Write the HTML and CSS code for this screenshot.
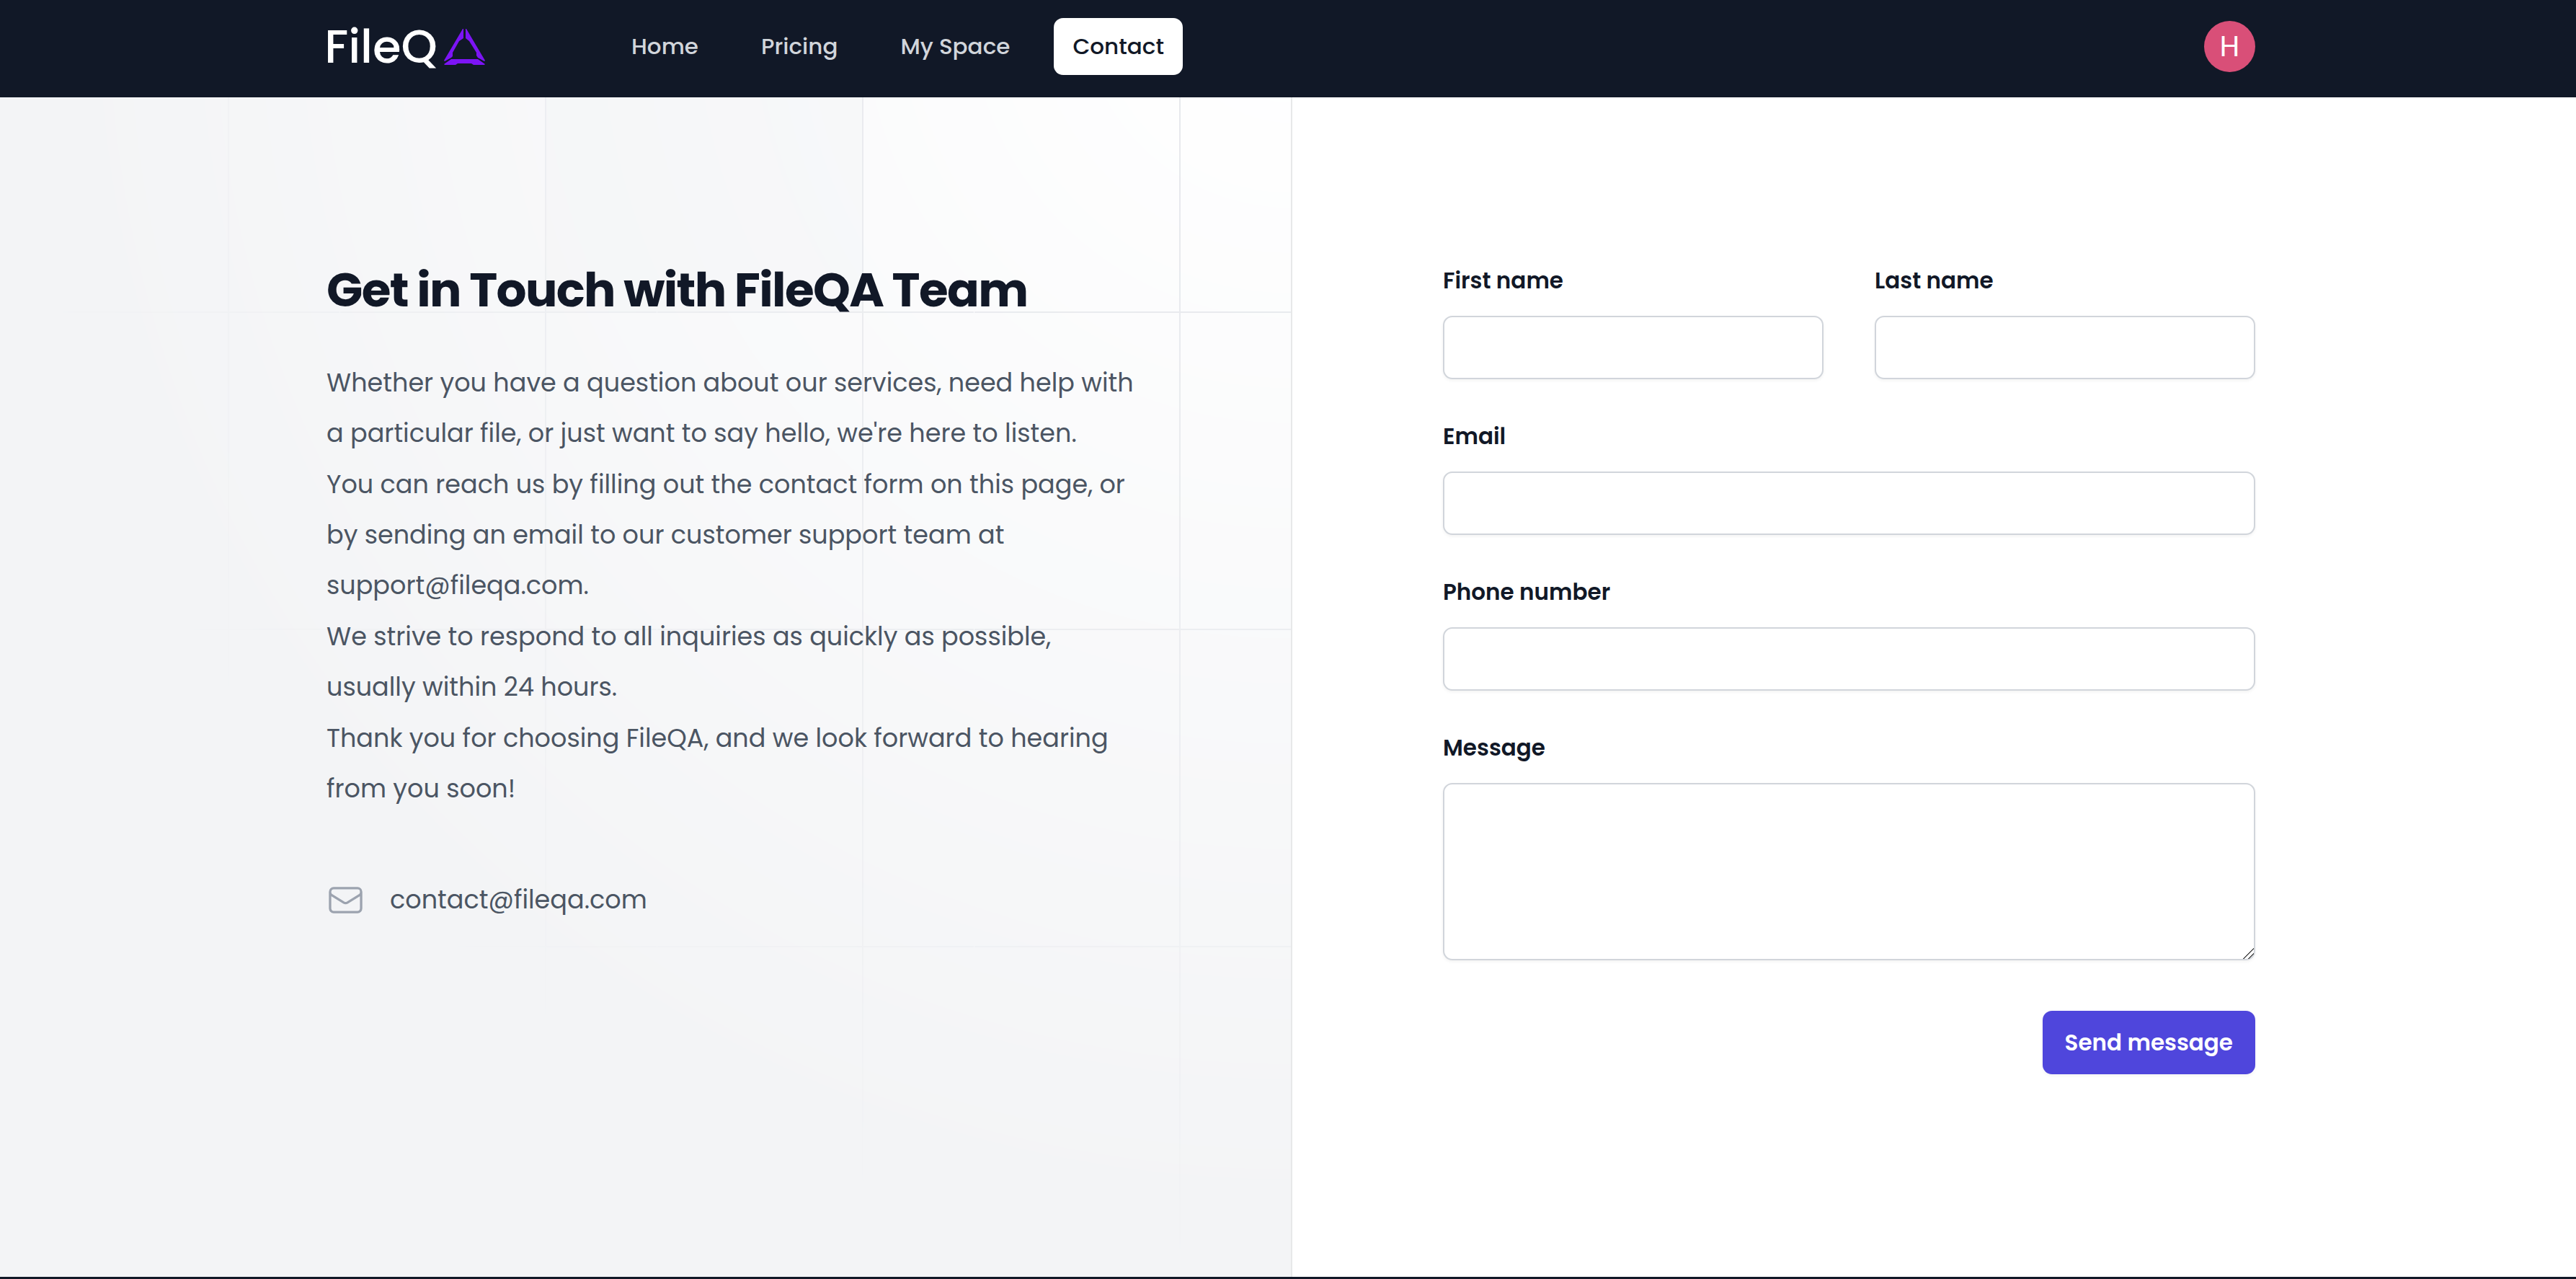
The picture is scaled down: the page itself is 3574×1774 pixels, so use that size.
FILE: index.html
```html
<!DOCTYPE html>
<html lang="en">
<head>
<meta charset="utf-8">
<meta name="viewport" content="width=device-width, initial-scale=1">
<title>Contact - FileQA</title>
<link rel="stylesheet" href="styles.css">
</head>
<body>
<div class="page">
  <header class="site-header">
    <div class="container header-row">
      <a class="logo" href="#">
        <span class="logo-text">FileQ</span>
        <svg class="logo-mark" viewBox="0 0 57 50" aria-hidden="true">
          <path d="M27 0H26L0 44L1 45L10 40L12 38V33L21 17L27 13Z"/>
          <path d="M30 0H31L57 44L56 45L47 40L45 37V33L35 17L30 13Z"/>
          <path d="M1 50L0 49L10 42H47L57 49L56 50H41L38 48H19L16 50Z"/>
        </svg>
      </a>
      <nav class="nav" aria-label="Main">
        <a class="nav-link" href="#">Home</a>
        <a class="nav-link" href="#">Pricing</a>
        <a class="nav-link" href="#">My Space</a>
        <a class="nav-link active" href="#" aria-current="page">Contact</a>
      </nav>
      <button class="avatar" type="button" aria-label="Account">H</button>
    </div>
  </header>

  <div class="backdrop" aria-hidden="true">
    <svg class="grid-lines" width="100%" height="100%">
      <defs>
        <pattern id="grid" width="440" height="440" x="100%" y="-8" patternUnits="userSpaceOnUse">
          <path d="M286 440V1M1 1H440" fill="none"/>
        </pattern>
      </defs>
      <rect width="100%" height="100%" fill="#fff" stroke="none"/>
      <svg x="100%" y="-8" overflow="visible">
        <path d="M-1035 0h442v442h-442Z" fill="#f9fafb" stroke="none"/>
      </svg>
      <rect width="100%" height="100%" fill="url(#grid)" stroke="none"/>
    </svg>
  </div>

  <main class="container contact">
    <section class="intro">
      <h1>Get in Touch with FileQA Team</h1>
      <div class="copy">
        <p>Whether you have a question about our services, need help with<br>a particular file, or just want to say hello, we're here to listen.</p>
        <p>You can reach us by filling out the contact form on this page, or<br>by sending an email to our customer support team at<br>support@fileqa.com.</p>
        <p>We strive to respond to all inquiries as quickly as possible,<br>usually within 24 hours.</p>
        <p>Thank you for choosing FileQA, and we look forward to hearing<br>from you soon!</p>
      </div>
      <div class="email-row">
        <svg class="mail-icon" viewBox="0 0 24 24" aria-hidden="true">
          <path d="M21.75 6.75v10.5a2.25 2.25 0 01-2.25 2.25h-15a2.25 2.25 0 01-2.25-2.25V6.75m19.5 0A2.25 2.25 0 0019.5 4.5h-15a2.25 2.25 0 00-2.25 2.25m19.5 0v.243a2.25 2.25 0 01-1.07 1.916l-7.5 4.615a2.25 2.25 0 01-2.36 0L3.32 8.91a2.25 2.25 0 01-1.07-1.916V6.75"/>
        </svg>
        <a href="mailto:contact@fileqa.com">contact@fileqa.com</a>
      </div>
    </section>

    <form class="form">
      <div class="field">
        <label for="first-name">First name</label>
        <input id="first-name" type="text">
      </div>
      <div class="field">
        <label for="last-name">Last name</label>
        <input id="last-name" type="text">
      </div>
      <div class="field wide">
        <label for="email">Email</label>
        <input id="email" type="email">
      </div>
      <div class="field wide">
        <label for="phone">Phone number</label>
        <input id="phone" type="tel">
      </div>
      <div class="field wide">
        <label for="message">Message</label>
        <textarea id="message"></textarea>
      </div>
      <div class="actions wide">
        <button class="send" type="submit">Send message</button>
      </div>
    </form>
  </main>
</div>
<footer class="site-footer"></footer>
</body>
</html>
```
FILE: styles.css
```css
*, *::before, *::after { box-sizing: border-box; }

body {
  margin: 0;
  min-height: 100vh;
  display: flex;
  flex-direction: column;
  background: #fff;
  color: #111827;
  font-family: Poppins, Inter, "Liberation Sans", sans-serif;
}

a { color: inherit; text-decoration: none; }
h1, p { margin: 0; }

.page {
  position: relative;
  flex: 1;
}

.container {
  width: 100%;
  max-width: 2700px;
  margin: 0 auto;
  padding-left: 16px;
  padding-right: 8px;
}

/* Header */
.site-header {
  position: relative;
  z-index: 1;
  background: #111827;
  padding: 25px 0 31px;
}

.header-row {
  display: flex;
  align-items: center;
  height: 79px;
}

.logo {
  display: flex;
  align-items: center;
  gap: 12px;
  width: 397px;
}

.logo-text {
  display: flex;
  justify-content: center;
  width: 151px;
  color: #fff;
  font-size: 64px;
  font-weight: 500;
  line-height: 79px;
}

.logo-mark {
  width: 57px;
  height: 50px;
  fill: #7c14f5;
}

.nav {
  display: flex;
  gap: 35px;
}

.nav-link {
  padding: 0 26px;
  border-radius: 13px;
  color: #d1d5db;
  font-size: 31px;
  font-weight: 500;
  line-height: 79px;
}

.nav-link.active {
  background: #fff;
  color: #111827;
}

.avatar {
  width: 71px;
  height: 71px;
  margin-left: auto;
  padding: 0;
  border: 0;
  border-radius: 50%;
  background: #d94f78;
  color: #fff;
  font: 400 39px Roboto, sans-serif;
}

/* Patterned panel behind the intro */
.backdrop {
  position: absolute;
  top: 0;
  bottom: 0;
  left: 0;
  width: calc(50% + 6px);
  overflow: hidden;
  background: #f3f4f6;
  border-right: 2px solid #e7e8e9;
}

.grid-lines {
  display: block;
  stroke: #e5e7eb;
  stroke-width: 2;
  -webkit-mask-image: radial-gradient(100% 100% at top right, #fff, transparent);
  mask-image: radial-gradient(100% 100% at top right, #fff, transparent);
}

/* Contact */
.contact {
  position: relative;
  display: grid;
  grid-template-columns: minmax(0, 1fr) minmax(0, 1fr);
  column-gap: 422px;
  align-items: start;
  padding-top: 228px;
  padding-bottom: 281px;
}

.intro { white-space: nowrap; }

h1 {
  font-size: 66px;
  font-weight: 700;
  letter-spacing: -0.025em;
  line-height: 79px;
}

.copy {
  display: grid;
  gap: 1px;
  margin-top: 54px;
  color: #4b5563;
  font-size: 35px;
  line-height: 70px;
}

.email-row {
  display: flex;
  align-items: center;
  gap: 35px;
  margin-top: 88px;
  color: #4b5563;
  font-size: 35px;
  line-height: 62px;
}

.mail-icon {
  width: 53px;
  height: 53px;
  fill: none;
  stroke: #9ca3af;
  stroke-width: 1.5;
  stroke-linecap: round;
  stroke-linejoin: round;
}

.form {
  display: grid;
  grid-template-columns: 1fr 1fr;
  gap: 53px 71px;
}

.wide { grid-column: 1 / -1; }

.field {
  display: grid;
  gap: 22px;
}

.field label {
  font-size: 31px;
  font-weight: 600;
  line-height: 53px;
}

.field input,
.field textarea {
  display: block;
  width: 100%;
  height: 88px;
  padding: 18px 31px;
  border: 2px solid #d1d5db;
  border-radius: 13px;
  background: #fff;
  box-shadow: 0 2px 4px rgba(0, 0, 0, 0.05);
  color: inherit;
  font: inherit;
  font-size: 31px;
}

.field textarea { height: 246px; }

.field textarea::-webkit-resizer {
  background: linear-gradient(135deg, transparent 48%, #555 48%, #555 54%, transparent 54%, transparent 72%, #555 72%, #555 78%, transparent 78%);
}

.actions {
  display: flex;
  justify-content: flex-end;
  padding-top: 17px;
}

.send {
  height: 88px;
  padding: 0 31px;
  border: 0;
  border-radius: 13px;
  background: #4f46dc;
  box-shadow: 0 2px 4px rgba(0, 0, 0, 0.05);
  color: #fff;
  font: inherit;
  font-size: 31px;
  font-weight: 600;
}

.site-footer {
  height: 3px;
  background: #111827;
}
```
